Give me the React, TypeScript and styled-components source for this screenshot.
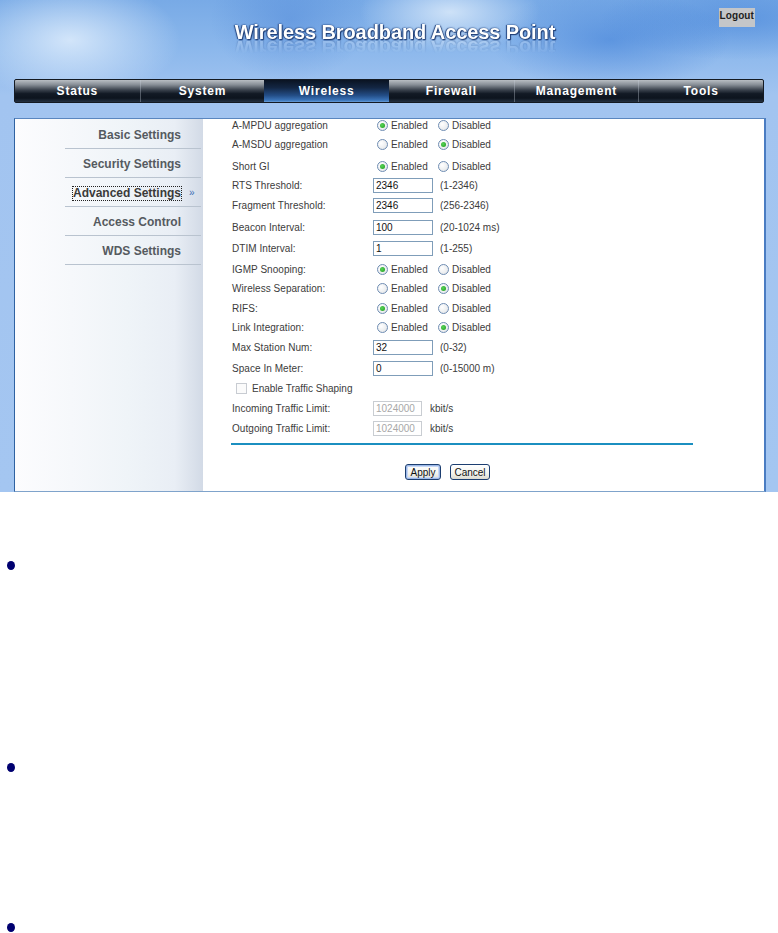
import React from "react";
import styled, { createGlobalStyle, css } from "styled-components";

const Global = createGlobalStyle`
  html, body { margin: 0; padding: 0; background: #ffffff; }
  body { font-family: "Liberation Sans", Arial, sans-serif; }
  * { box-sizing: border-box; }
`;

const Shell = styled.div`
  width: 778px;
  height: 492px;
  display: flex;
  flex-direction: column;
  background:
    radial-gradient(ellipse 110px 60px at 70px 40px, rgba(235, 245, 255, 0.75), rgba(235, 245, 255, 0) 100%),
    radial-gradient(ellipse 90px 40px at 450px 12px, rgba(240, 248, 255, 0.7), rgba(240, 248, 255, 0) 100%),
    radial-gradient(ellipse 120px 50px at 610px 40px, rgba(40, 110, 210, 0.45), rgba(40, 110, 210, 0) 100%),
    radial-gradient(ellipse 80px 60px at 290px 20px, rgba(60, 120, 210, 0.35), rgba(60, 120, 210, 0) 100%),
    radial-gradient(ellipse 140px 40px at 740px 20px, rgba(60, 125, 215, 0.5), rgba(60, 125, 215, 0) 100%),
    linear-gradient(to bottom, #78aae6 0px, #8cb8ec 50px, #a2c4f0 95px, #a4c6f1 100%);
`;

const Header = styled.header`
  height: 79px;
  display: grid;
  grid-template-columns: 1fr auto 1fr;
  padding-left: 12px;
`;

const Title = styled.h1`
  grid-column: 2;
  margin: 0;
  padding-top: 21px;
  font-family: "Liberation Sans", Arial, sans-serif;
  font-weight: bold;
  font-size: 20px;
  line-height: 22px;
  height: 43px;
  color: #ffffff;
  letter-spacing: -0.1px;
  text-shadow: 0 0 2px #1f3f78, 1px 1px 1px #1d3a70, -1px 0 1px #2a4c86;
  -webkit-box-reflect: below -6px linear-gradient(transparent 62%, rgba(255, 255, 255, 0.28));
`;

const LogoutCell = styled.div`
  grid-column: 3;
  display: flex;
  justify-content: flex-end;
  align-items: flex-start;
  padding-top: 8px;
  padding-right: 23px;
`;

const LogoutButton = styled.span`
  display: block;
  width: 36px;
  height: 19px;
  background: #c4c6c9;
  color: #1e1e1e;
  font-size: 10px;
  font-weight: bold;
  letter-spacing: 0.1px;
  line-height: 12px;
  padding-top: 2px;
  text-align: right;
  padding-right: 1px;
`;

const Nav = styled.nav`
  margin: 0 14px;
  height: 24px;
  display: grid;
  grid-template-columns: repeat(6, 1fr);
  border: 1px solid #141a22;
  border-radius: 2px;
  background: linear-gradient(
    to bottom,
    #b9bec3 0%,
    #868d95 22%,
    #3a424d 45%,
    #121a25 62%,
    #0d141e 82%,
    #253141 100%
  );
`;

const Tab = styled.div<{ $active?: boolean }>`
  display: flex;
  align-items: center;
  justify-content: center;
  color: #ffffff;
  font-size: 12px;
  font-weight: bold;
  letter-spacing: 0.8px;
  border-left: 1px solid rgba(200, 210, 220, 0.35);
  &:first-child { border-left: none; }
  ${(p) =>
    p.$active &&
    css`
      border-left: none;
      background: linear-gradient(
        to bottom,
        #0a1322 0%,
        #132643 35%,
        #234d86 70%,
        #3b75ba 92%,
        #6a9ed8 100%
      );
      & + div { border-left: none; }
    `}
`;

const Panel = styled.main`
  margin: 15px 12px 0 14px;
  height: 374px;
  display: flex;
  background: #ffffff;
  border-top: 1px solid #5a86bf;
  border-left: 1px solid #2f62a2;
  border-right: 2px solid #4a7cc2;
  border-bottom: 1px solid #7fa3cb;
  overflow: hidden;
`;

const Sidebar = styled.aside`
  width: 188px;
  flex: none;
  display: flex;
  flex-direction: column;
  padding: 1px 2px 0 50px;
  background: linear-gradient(
    to right,
    #fcfcfe 0%,
    #f6f8fb 30%,
    #eff4f8 60%,
    #e9eef5 85%,
    #d2dae6 100%
  );
`;

const MenuItem = styled.div<{ $active?: boolean }>`
  height: 29px;
  display: flex;
  align-items: center;
  justify-content: flex-end;
  padding-top: 2px;
  border-bottom: 1px solid #b9c3cf;
  font-size: 12px;
  font-weight: bold;
  color: ${(p) => (p.$active ? "#3a3a3a" : "#555a60")};
`;

const MenuLabel = styled.span<{ $active?: boolean }>`
  line-height: 13px;
  ${(p) =>
    p.$active &&
    css`
      outline: 1px dotted #222;
      outline-offset: 0px;
    `}
`;

const MenuArrow = styled.span`
  width: 20px;
  padding-left: 8px;
  font-size: 10px;
  font-weight: normal;
  color: #3a6fb5;
  line-height: 12px;
`;

const Content = styled.section`
  flex: 1;
  display: flex;
  flex-direction: column;
  padding-left: 29px;
  margin-top: -2px;
`;

const Row = styled.div<{ $h: number }>`
  height: ${(p) => p.$h}px;
  display: grid;
  grid-template-columns: 141px 1fr;
  align-content: start;
  font-size: 10px;
  color: #3c3c3c;
`;

const Cell = styled.div`
  height: 16px;
  display: flex;
  align-items: center;
  white-space: nowrap;
`;

const Label = styled(Cell)`
  letter-spacing: 0.05px;
`;

const Radio = styled.span<{ $on?: boolean }>`
  width: 11px;
  height: 11px;
  border-radius: 50%;
  border: 1px solid #6f8db3;
  background: radial-gradient(circle at 35% 35%, #ffffff 0%, #eceef0 60%, #d8dbe0 100%);
  display: flex;
  align-items: center;
  justify-content: center;
  margin: 0 3px 0 4px;
  flex: none;
  &::after {
    content: "";
    width: 5px;
    height: 5px;
    border-radius: 50%;
    background: ${(p) => (p.$on ? "radial-gradient(circle at 40% 40%, #5ad45a, #1a9a1a)" : "transparent")};
  }
`;

const Option = styled.span`
  display: inline-flex;
  align-items: center;
  width: 61px;
`;

const TextBox = styled.span<{ $w?: number; $disabled?: boolean }>`
  width: ${(p) => p.$w || 60}px;
  height: 15px;
  border: 1px solid ${(p) => (p.$disabled ? "#c9cdd2" : "#7f9db9")};
  background: #ffffff;
  color: ${(p) => (p.$disabled ? "#a8a8a8" : "#111")};
  font-size: 10px;
  line-height: 13px;
  padding-left: 2px;
  flex: none;
`;

const Hint = styled.span<{ $gap?: number }>`
  margin-left: ${(p) => p.$gap ?? 7}px;
  color: #3c3c3c;
`;

const Check = styled.span`
  width: 11px;
  height: 11px;
  border: 1px solid #c8ccd2;
  background: #fbfbfb;
  margin: 0 5px 0 4px;
  flex: none;
`;

const CheckLabel = styled(Cell)`
  grid-column: 1 / span 2;
`;

const Divider = styled.hr`
  margin: 3px 0 0 -1px;
  width: 462px;
  height: 2px;
  border: none;
  background: #1b8fc0;
`;

const Actions = styled.div`
  margin-top: 19px;
  width: 462px;
  display: flex;
  justify-content: center;
  gap: 9px;
  padding-right: 31px;
`;

const Button = styled.span<{ $focus?: boolean; $w: number }>`
  width: ${(p) => p.$w}px;
  height: 16px;
  border: 1px solid #1c3e70;
  border-radius: 3px;
  background: linear-gradient(to bottom, #ffffff 0%, #f3f3ee 60%, #dcdad0 100%);
  font-size: 10px;
  color: #111;
  display: flex;
  align-items: center;
  justify-content: center;
  ${(p) =>
    p.$focus &&
    css`
      box-shadow: inset 0 0 0 1px #9cb8e8, inset 0 0 0 2px #c8d8f4;
    `}
`;

const Notes = styled.ul`
  list-style: none;
  margin: 0;
  padding: 69px 0 0 7px;
`;

const Note = styled.li<{ $h: number }>`
  height: ${(p) => p.$h}px;
  &::before {
    content: "";
    display: block;
    width: 8px;
    height: 9px;
    border-radius: 50%;
    background: #000070;
  }
`;

type R =
  | { kind: "radio"; label: string; on: boolean; h: number }
  | { kind: "input"; label: string; value: string; hint: string; h: number }
  | { kind: "check"; label: string; h: number }
  | { kind: "limit"; label: string; value: string; h: number };

const rows: R[] = [
  { kind: "radio", label: "A-MPDU aggregation", on: true, h: 19 },
  { kind: "radio", label: "A-MSDU aggregation", on: false, h: 22 },
  { kind: "radio", label: "Short GI", on: true, h: 19 },
  { kind: "input", label: "RTS Threshold:", value: "2346", hint: "(1-2346)", h: 20 },
  { kind: "input", label: "Fragment Threshold:", value: "2346", hint: "(256-2346)", h: 22 },
  { kind: "input", label: "Beacon Interval:", value: "100", hint: "(20-1024 ms)", h: 21 },
  { kind: "input", label: "DTIM Interval:", value: "1", hint: "(1-255)", h: 21 },
  { kind: "radio", label: "IGMP Snooping:", on: true, h: 19 },
  { kind: "radio", label: "Wireless Separation:", on: false, h: 20 },
  { kind: "radio", label: "RIFS:", on: true, h: 19 },
  { kind: "radio", label: "Link Integration:", on: false, h: 20 },
  { kind: "input", label: "Max Station Num:", value: "32", hint: "(0-32)", h: 21 },
  { kind: "input", label: "Space In Meter:", value: "0", hint: "(0-15000 m)", h: 20 },
  { kind: "check", label: "Enable Traffic Shaping", h: 20 },
  { kind: "limit", label: "Incoming Traffic Limit:", value: "1024000", h: 20 },
  { kind: "limit", label: "Outgoing Traffic Limit:", value: "1024000", h: 20 },
];

const tabs = ["Status", "System", "Wireless", "Firewall", "Management", "Tools"];
const menu = ["Basic Settings", "Security Settings", "Advanced Settings", "Access Control", "WDS Settings"];

function FormRow({ r }: { r: R }) {
  if (r.kind === "check") {
    return (
      <Row $h={r.h}>
        <CheckLabel>
          <Check />
          {r.label}
        </CheckLabel>
      </Row>
    );
  }
  return (
    <Row $h={r.h}>
      <Label>{r.label}</Label>
      <Cell>
        {r.kind === "radio" && (
          <>
            <Option>
              <Radio $on={r.on} />
              Enabled
            </Option>
            <Option>
              <Radio $on={!r.on} />
              Disabled
            </Option>
          </>
        )}
        {r.kind === "input" && (
          <>
            <TextBox>{r.value}</TextBox>
            <Hint>{r.hint}</Hint>
          </>
        )}
        {r.kind === "limit" && (
          <>
            <TextBox $w={49} $disabled>
              {r.value}
            </TextBox>
            <Hint $gap={8}>kbit/s</Hint>
          </>
        )}
      </Cell>
    </Row>
  );
}

export default function App() {
  return (
    <>
      <Global />
      <Shell>
        <Header>
          <Title>Wireless Broadband Access Point</Title>
          <LogoutCell>
            <LogoutButton>Logout</LogoutButton>
          </LogoutCell>
        </Header>
        <Nav>
          {tabs.map((t) => (
            <Tab key={t} $active={t === "Wireless"}>
              {t}
            </Tab>
          ))}
        </Nav>
        <Panel>
          <Sidebar>
            {menu.map((m) => {
              const active = m === "Advanced Settings";
              return (
                <MenuItem key={m} $active={active}>
                  <MenuLabel $active={active}>{m}</MenuLabel>
                  <MenuArrow>{active ? "»" : ""}</MenuArrow>
                </MenuItem>
              );
            })}
          </Sidebar>
          <Content>
            {rows.map((r) => (
              <FormRow key={r.label} r={r} />
            ))}
            <Divider />
            <Actions>
              <Button $w={36} $focus>
                Apply
              </Button>
              <Button $w={40}>Cancel</Button>
            </Actions>
          </Content>
        </Panel>
      </Shell>
      <Notes>
        <Note $h={202} />
        <Note $h={160} />
        <Note $h={20} />
      </Notes>
    </>
  );
}
